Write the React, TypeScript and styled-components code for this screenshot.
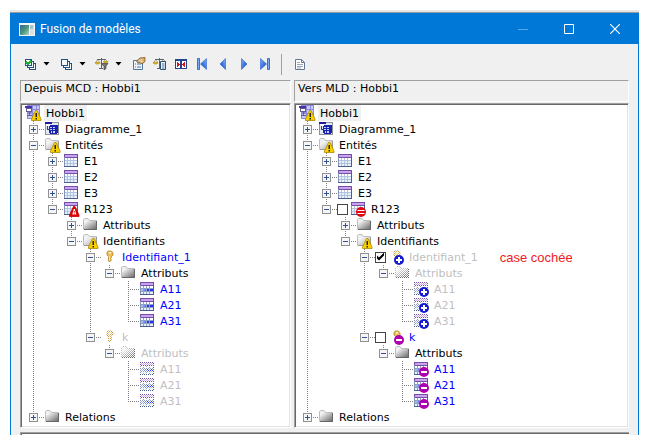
import React, { useState } from 'react';
import styled, { createGlobalStyle, css } from 'styled-components';

const GlobalStyle = createGlobalStyle`
  * { box-sizing: border-box; }
  body { margin: 0; background: #fff; }
  button { border: 0; padding: 0; background: none; font: inherit; color: inherit; }
`;

/* ---------- Window frame ---------- */

const Page = styled.div`
  padding: 13px 10px 9px;
`;

const Window = styled.main`
  border: 1px solid #0078d7;
  border-bottom: 0;
  background: #f0f0f0;
  box-shadow: 0 -1px 0 #9a9a9a, 0 -3px 0 #e6e6e6;
  font: 11px/16px "DejaVu Sans", Verdana, sans-serif;
  color: #000;
  overflow: hidden;
`;

const TitleBar = styled.header`
  display: flex;
  align-items: center;
  height: 30px;
  padding-left: 8px;
  background: #0078d7;
  color: #fff;
`;

const Title = styled.h1`
  flex: 1;
  margin: 0 0 0 5px;
  font: 12px/16px Roboto, "Segoe UI", sans-serif;
`;

const CaptionButton = styled.button`
  display: grid;
  place-items: center;
  width: 46px;
  height: 30px;
  &:disabled { opacity: 0.35; }
`;

/* ---------- Toolbar ---------- */

const Toolbar = styled.div`
  display: flex;
  align-items: center;
  gap: 5px;
  height: 36px;
  padding: 4px 11px 0;
`;

const SplitGroup = styled.div`
  display: flex;
  gap: 4px;
`;

const Split = styled.div`
  display: flex;
`;

const ToolButton = styled.button`
  display: grid;
  place-items: center;
  width: 16px;
  height: 16px;
`;

const Separator = styled.div`
  width: 1px;
  height: 21px;
  margin: 0 5px 0 3px;
  background: #a0a0a0;
`;

/* ---------- Panes ---------- */

const Panes = styled.div`
  display: grid;
  grid-template-columns: 271fr 335fr;
  gap: 3px;
  padding: 0 9px;
`;

const Pane = styled.section`
  min-width: 0;
`;

const PaneTitle = styled.h2`
  height: 22px;
  margin: 0 0 1px;
  padding-left: 3px;
  border: 1px solid #fff;
  border-top-color: #a0a0a0;
  border-left-color: #a0a0a0;
  font: inherit;
`;

const TreeBox = styled.div`
  padding: 1px 1px 2px 4px;
  border: 1px solid #fff;
  border-top-color: #a0a0a0;
  border-left-color: #a0a0a0;
  background: #fff;
  box-shadow: inset 1px 1px 0 #696969, inset -1px -1px 0 #e3e3e3;
`;

const BottomPane = styled.div`
  height: 3px;
  margin: 4px 9px 0;
  border-top: 1px solid #a0a0a0;
  border-left: 1px solid #a0a0a0;
  background: #fff;
  box-shadow: inset 1px 1px 0 #696969;
`;

/* ---------- Tree ---------- */

const List = styled.ul`
  margin: 0;
  padding: 0;
  list-style: none;
`;

const Row = styled.div`
  display: flex;
  align-items: center;
  height: 16px;
  white-space: nowrap;
`;

type GuideKind = 'none' | 'through' | 'branch' | 'last';

const vDots = 'repeating-linear-gradient(to bottom, #808080 0 1px, transparent 1px 2px)';
const hDots = 'repeating-linear-gradient(to right, #808080 0 1px, transparent 1px 2px)';

const Guide = styled.span<{ $kind: GuideKind }>`
  display: grid;
  flex: none;
  align-items: center;
  width: 19px;
  height: 16px;
  padding-left: 4px;
  background-repeat: no-repeat;
  ${p => p.$kind === 'through' && css`
    background-image: ${vDots};
    background-size: 1px 16px;
    background-position: 8px 0;
  `}
  ${p => (p.$kind === 'branch' || p.$kind === 'last') && css`
    background-image: ${vDots}, ${hDots};
    background-size: 1px ${p.$kind === 'last' ? 9 : 16}px, 11px 1px;
    background-position: 8px 0, 8px 8px;
  `}
`;

const Expander = styled.button`
  width: 9px;
  height: 9px;
  margin-top: 1px;
  svg { display: block; }
`;

const Check = styled.input`
  appearance: none;
  flex: none;
  width: 11px;
  height: 11px;
  margin: 0 2px 0 0;
  border: 1px solid #444;
  background: #fff;
  &:checked::before {
    content: "";
    display: block;
    height: 9px;
    background: #000;
    clip-path: polygon(1px 3px, 3px 5px, 8px 0, 8px 3px, 3px 8px, 1px 6px);
  }
`;

const Glyph = styled.svg`
  display: block;
  flex: none;
  width: 16px;
  height: 16px;
`;

type Tone = 'normal' | 'new' | 'ghost';
const tones: Record<Tone, string> = { normal: '#000', new: '#0000ff', ghost: '#c0c0c0' };

const Label = styled.label<{ $tone: Tone; $current?: boolean }>`
  height: 16px;
  margin-left: 3px;
  padding: 0 2px;
  line-height: 18px;
  color: ${p => tones[p.$tone]};
  background: ${p => (p.$current ? '#f0f0f0' : 'transparent')};
`;

const Note = styled.span`
  height: 16px;
  margin-left: 20px;
  font: 13px/18px "Liberation Sans", Arial, sans-serif;
  color: #ed1c24;
`;

/* ---------- Tree icons ---------- */

type IconName = 'model' | 'diagram' | 'folder' | 'table' | 'column' | 'key';
type BadgeName = 'warning' | 'error' | 'stop' | 'add' | 'remove';

const cellFill = (x: number, y: number, column?: boolean) => {
  if (column && y === 8) return x < 4 ? '#a8b4f4' : x < 8 ? '#7580f2' : '#2b35e8';
  return y === 5 ? '#fff' : '#e8effc';
};

const TableShape = ({ column }: { column?: boolean }) => (
  <g shapeRendering="crispEdges">
    <rect x="1" y="1" width="14" height="13" fill={column ? '#8ea2c6' : '#b4c3dc'} />
    <rect x="1" y="1" width="14" height="4" fill="#7350a4" />
    <rect x="2" y="2" width="12" height="2" fill="#cba2f0" />
    {[5, 8, 11].map(y =>
      [2, 5, 8, 11].map(x => (
        <rect
          key={`${x}-${y}`}
          x={x}
          y={y}
          width={x === 11 ? 3 : 2}
          height="2"
          fill={cellFill(x, y, column)}
        />
      ))
    )}
    <path d="M1 4h1v10h-1z" fill="#8295b8" />
    <path d="M14 4h1v10h-1zM1 13h14v1H1z" fill="#4a5f8c" />
  </g>
);

const FolderShape = ({ light }: { light?: boolean }) => (
  <g>
    <path d="M1 13V2.500L2.500 1.500H6L7.500 3H15V13Z" fill="#eee" />
    <path d="M1.500 12.500V2.500L2.500 1.500H6L7.500 3.500H14.500" fill="none" stroke="#bdbdbd" />
    <rect x="2" y="4" width="13" height="9" fill={light ? 'url(#folderLight)' : 'url(#folderDark)'} />
    <path d="M2 12.500H15M14.500 4V13" stroke={light ? '#9a9a9a' : '#666'} />
  </g>
);

const shapes: Record<IconName, React.ReactNode> = {
  model: (
    <g shapeRendering="crispEdges">
      <rect x="2" y="0" width="13" height="14" fill="#8c8ae0" />
      <path d="M8 1h3v3H8zM12 1h2v3h-2zM8 5h3v3H8zM12 5h2v3h-2zM3 9h4v4H3zM8 9h3v4H8zM12 9h2v4h-2z" fill="#c9c9fa" />
      <rect x="0" y="1" width="7" height="2" fill="#4a30a8" />
      <rect x="1.500" y="3.500" width="5" height="3" fill="#fff" stroke="#5b5b90" />
      <path d="M4.500 7v3M2 10.500h5" stroke="#5c5ca0" />
    </g>
  ),
  diagram: (
    <g shapeRendering="crispEdges">
      <rect x="1" y="1" width="14" height="13" fill="#8e9098" />
      <rect x="2" y="2" width="12" height="11" fill="#e5e9f2" />
      <path d="M1 1h7v2H1z" fill="#2718a0" />
      <path d="M2 3h4v2H2z" fill="#fff" />
      <path d="M6 4h8v1h-8zM5 5h9v7h-1v1H6v-1H5z" fill="#1824ad" />
      <path d="M6 6h2v1H6zM9 6h2v1H9zM6 8h2v1H6zM9 8h2v1H9zM7 10h1v2H7zM9 10h2v2H9z" fill="#c6d2ff" />
      <path d="M3 5v3h2" fill="none" stroke="#333b90" />
    </g>
  ),
  folder: <FolderShape />,
  table: <TableShape />,
  column: <TableShape column />,
  key: (
    <g>
      <path d="M6 3.500L7 2H10L12 3.500V6L10.500 7.500V8.500L9.500 9.500L10.500 10.500L9.500 12L8.500 13L7.500 12V7.500L6 6Z" fill="#e8c057" stroke="#b5842c" strokeWidth="0.800" />
      <circle cx="9" cy="3.800" r="1" fill="#fff8df" />
      <path d="M8.500 7v4.500" stroke="#fbe49b" />
    </g>
  ),
};

const badges: Record<BadgeName, React.ReactNode> = {
  warning: (
    <g>
      <path d="M10.500 5.500H12L16 14V15.500H6.500V14Z" fill="#f8d000" stroke="#b08a00" strokeWidth="0.800" />
      <path d="M10.500 8h1.500v4h-1.500zM10.500 13h1.500v1.500h-1.500z" fill="#222" />
    </g>
  ),
  error: (
    <g>
      <path d="M10.500 5.500H12L16 14V15.500H6.500V14Z" fill="#e00000" stroke="#c00000" strokeWidth="0.800" />
      <path d="M10.800 8h1l1.500 5.500h-4z" fill="#fff" />
      <path d="M10.800 10h1v1.500h-1zM10.800 12.500h1v1h-1z" fill="#d00000" />
    </g>
  ),
  stop: (
    <g>
      <circle cx="11" cy="11" r="5" fill="#df0712" />
      <path d="M7.500 9.500h7M7.500 12.500h7" stroke="#fff" />
    </g>
  ),
  add: (
    <g>
      <circle cx="11" cy="11" r="5" fill="#151bcf" />
      <path d="M11 8v6M8 11h6" stroke="#fff" strokeWidth="2" />
    </g>
  ),
  remove: (
    <g>
      <circle cx="11" cy="11" r="5" fill="#ae00ae" />
      <path d="M8 11h6" stroke="#fff" strokeWidth="2" />
    </g>
  ),
};

const TreeIcon = ({ icon, badge, ghost }: { icon: IconName; badge?: BadgeName; ghost?: boolean }) => (
  <Glyph viewBox="0 0 16 16" overflow="visible" aria-hidden="true">
    <defs>
      <linearGradient id="folderDark" x1="0" y1="0" x2="1" y2="1">
        <stop offset="0.100" stopColor="#f4f4f4" />
        <stop offset="1" stopColor="#5e5e5e" />
      </linearGradient>
      <linearGradient id="folderLight" x1="0" y1="0" x2="1" y2="1">
        <stop offset="0.200" stopColor="#f2f2f2" />
        <stop offset="1" stopColor="#a4a4a4" />
      </linearGradient>
      <pattern id="checker" width="2" height="2" patternUnits="userSpaceOnUse">
        <path d="M0 0h1v1H0zM1 1h1v1H1z" fill="#fff" />
      </pattern>
      <mask id="dither" maskUnits="userSpaceOnUse" x="0" y="0" width="16" height="16">
        <rect width="16" height="16" fill="url(#checker)" />
      </mask>
    </defs>
    <g mask={ghost ? 'url(#dither)' : undefined}>
      {icon === 'folder' && badge ? <FolderShape light /> : shapes[icon]}
    </g>
    {badge && badges[badge]}
  </Glyph>
);

/* ---------- Tree data ---------- */

interface TreeNode {
  label: string;
  icon: IconName;
  badge?: BadgeName;
  tone?: Tone;
  checked?: boolean;
  note?: string;
  collapsed?: boolean;
  children?: TreeNode[];
}

const columns = (tone: Tone, badge?: BadgeName): TreeNode => ({
  label: 'Attributs',
  icon: 'folder',
  tone: tone === 'ghost' ? 'ghost' : 'normal',
  children: ['A11', 'A21', 'A31'].map(label => ({ label, icon: 'column', tone, badge })),
});

const buildModel = (entityExtra: Partial<TreeNode>, identifiers: TreeNode[]): TreeNode => ({
  label: 'Hobbi1',
  icon: 'model',
  badge: 'warning',
  children: [
    { label: 'Diagramme_1', icon: 'diagram', collapsed: true, children: [] },
    {
      label: 'Entités',
      icon: 'folder',
      badge: 'warning',
      children: [
        ...['E1', 'E2', 'E3'].map((label): TreeNode => ({ label, icon: 'table', collapsed: true, children: [] })),
        {
          label: 'R123',
          icon: 'table',
          ...entityExtra,
          children: [
            { label: 'Attributs', icon: 'folder', collapsed: true, children: [] },
            { label: 'Identifiants', icon: 'folder', badge: 'warning', children: identifiers },
          ],
        },
      ],
    },
    { label: 'Relations', icon: 'folder', collapsed: true, children: [] },
  ],
});

const source = buildModel({ badge: 'error' }, [
  { label: 'Identifiant_1', icon: 'key', tone: 'new', children: [columns('new')] },
  { label: 'k', icon: 'key', tone: 'ghost', children: [columns('ghost')] },
]);

const target = buildModel({ badge: 'stop', checked: false }, [
  {
    label: 'Identifiant_1',
    icon: 'key',
    badge: 'add',
    tone: 'ghost',
    checked: true,
    note: 'case cochée',
    children: [columns('ghost', 'add')],
  },
  { label: 'k', icon: 'key', badge: 'remove', tone: 'new', checked: false, children: [columns('new', 'remove')] },
]);

interface ItemProps {
  node: TreeNode;
  path: string;
  lines: boolean[];
  last: boolean;
  root?: boolean;
}

const TreeItem = ({ node, path, lines, last, root }: ItemProps) => {
  const [open, setOpen] = useState(!node.collapsed);
  const tone = node.tone ?? 'normal';
  const hasCheck = node.checked !== undefined;
  return (
    <li role="treeitem" aria-expanded={node.children ? open : undefined} aria-selected={!!root}>
      <Row>
        {lines.map((line, i) => <Guide key={i} $kind={line ? 'through' : 'none'} />)}
        {!root && (
          <Guide $kind={last ? 'last' : 'branch'}>
            {node.children && (
              <Expander
                type="button"
                aria-label={`${open ? 'Réduire' : 'Développer'} ${node.label}`}
                onClick={() => setOpen(!open)}
              >
                <svg width="9" height="9" shapeRendering="crispEdges" aria-hidden="true">
                  <rect x="0.500" y="0.500" width="8" height="8" fill="#f6f6f6" stroke="#919191" />
                  <path d={open ? 'M2 4.500h5' : 'M2 4.500h5M4.500 2v5'} stroke="#33509c" />
                </svg>
              </Expander>
            )}
          </Guide>
        )}
        {hasCheck && <Check type="checkbox" id={path} defaultChecked={node.checked} />}
        <TreeIcon icon={node.icon} badge={node.badge} ghost={tone === 'ghost'} />
        <Label as={hasCheck ? 'label' : 'span'} htmlFor={hasCheck ? path : undefined} $tone={tone} $current={root}>
          {node.label}
        </Label>
        {node.note && <Note>{node.note}</Note>}
      </Row>
      {open && node.children && node.children.length > 0 && (
        <List role="group">
          {node.children.map((child, i) => (
            <TreeItem
              key={child.label}
              node={child}
              path={`${path}-${child.label}`}
              lines={root ? [] : [...lines, !last]}
              last={i === node.children!.length - 1}
            />
          ))}
        </List>
      )}
    </li>
  );
};

const ModelPane = ({ title, id, model }: { title: string; id: string; model: TreeNode }) => (
  <Pane>
    <PaneTitle>{title}</PaneTitle>
    <TreeBox>
      <List role="tree" aria-label={title}>
        <TreeItem node={model} path={id} lines={[]} last root />
      </List>
    </TreeBox>
  </Pane>
);

/* ---------- Toolbar icons ---------- */

const Stack = ({ ticked }: { ticked?: boolean }) => (
  <Glyph viewBox="0 0 16 16" shapeRendering="crispEdges">
    <g fill="#f5f9fc" stroke="#24527e">
      <path d="M7.500 7.500h6v6h-6z" />
      <path d="M5.500 5.500h6v6h-6z" />
      <path d="M3.500 3.500h6v6h-6z" />
    </g>
    {ticked && <path d="M4 6l2 2 3-3" fill="none" stroke="#1fae2d" strokeWidth="2" />}
  </Glyph>
);

const Balance = ({ document: withDocument }: { document?: boolean }) => (
  <Glyph viewBox="0 0 16 16">
    <path d="M3 3.500h9M7.500 2v10M5 12.500h4" stroke="#58636b" fill="none" />
    <path d="M3.500 3.500L1.500 7M3.500 3.500L6 7M11.500 3.500L9.500 6M11.500 3.500L14 6" stroke="#8b7d45" strokeWidth="0.700" />
    <path d="M1 6.500h5L5 8H2zM9.500 5.500H14L13 7h-3z" fill="#e9b913" stroke="#a97c0c" strokeWidth="0.500" />
    {withDocument ? (
      <g>
        <path d="M8.500 5.500h5v8h-5z" fill="#eaf2fb" stroke="#31527c" />
        <path d="M10 8h2.500M10 10h2.500M10 12h2.500" stroke="#31527c" strokeWidth="0.800" />
      </g>
    ) : (
      <path d="M7 7.500h7L12 10v2.500L10 14V10.500Z" fill="#777" stroke="#444" strokeWidth="0.700" />
    )}
  </Glyph>
);

const Properties = () => (
  <Glyph viewBox="0 0 16 16">
    <path d="M2.500 4.500h9v9h-9z" fill="#eef4fb" stroke="#52759f" />
    <path d="M4 8h1M6 8h4M4 11h1M6 11h4" stroke="#52759f" />
    <path d="M5.500 5L9 2l5-.5v4L11 8 9 6.500 7 7Z" fill="#d8b078" stroke="#805520" strokeWidth="0.800" />
    <path d="M8 4.500l3-1M9 6l3-1" stroke="#fbe6bb" strokeWidth="0.800" />
  </Glyph>
);

const Compare = () => (
  <Glyph viewBox="0 0 16 16" shapeRendering="crispEdges">
    <path d="M2.500 3.500h5v9h-5zM8.500 3.500h5v9h-5z" fill="#fff" stroke="#24448c" />
    <path d="M2 4h12" stroke="#24448c" strokeWidth="2" />
    <path d="M4 6h1v1h1v1h1v1H6v1H5v1H4zM12 6h-1v1h-1v1H9v1h1v1h1v1h1z" fill="#d31919" />
  </Glyph>
);

const BlueArrow = ({ back, bar }: { back?: boolean; bar?: boolean }) => (
  <Glyph viewBox="0 0 16 16">
    <defs>
      <linearGradient id="arrowBlue" x1="0" y1="0" x2="1" y2="1">
        <stop offset="0" stopColor="#7fb4f5" />
        <stop offset="1" stopColor="#0a3cc8" />
      </linearGradient>
    </defs>
    <g transform={back ? 'translate(16 0) scale(-1 1)' : undefined}>
      <path d={bar ? 'M3.500 2.500v11L9.500 8z' : 'M5.500 2.500v11L11 8z'} fill="url(#arrowBlue)" stroke="#2a62d2" strokeWidth="0.600" />
      {bar && <path d="M10.500 2.500h2v11h-2z" fill="#78a8ee" stroke="#2357c4" strokeWidth="0.800" />}
    </g>
  </Glyph>
);

const Report = () => (
  <Glyph viewBox="0 0 16 16">
    <path d="M3.500 3.500h6l3 3v7h-9z" fill="#fff" stroke="#657894" />
    <path d="M9.500 3.500v3h3" fill="none" stroke="#657894" />
    <path d="M5 6.500h3M5 8.500h6M5 10.500h6M5 12h4" stroke="#8193ad" strokeWidth="0.800" />
  </Glyph>
);

const Caret = () => (
  <svg width="7" height="4" viewBox="0 0 7 4" aria-hidden="true">
    <path d="M0.500 0h6L3.500 3.500z" fill="#000" />
  </svg>
);

const splitTools = [
  { label: 'Sélectionner', icon: <Stack ticked /> },
  { label: 'Désélectionner', icon: <Stack /> },
  { label: 'Filtrer', icon: <Balance /> },
];

const tools = [
  { label: 'Propriétés', icon: <Properties /> },
  { label: 'Options', icon: <Balance document /> },
  { label: 'Comparer', icon: <Compare /> },
  { label: 'Premier', icon: <BlueArrow back bar /> },
  { label: 'Précédent', icon: <BlueArrow back /> },
  { label: 'Suivant', icon: <BlueArrow /> },
  { label: 'Dernier', icon: <BlueArrow bar /> },
];

const AppIcon = () => (
  <svg width="16" height="13" shapeRendering="crispEdges" aria-hidden="true">
    <defs>
      <linearGradient id="appFill" x1="0" y1="0" x2="1" y2="1">
        <stop offset="0" stopColor="#3b62a0" />
        <stop offset="0.500" stopColor="#4a9478" />
        <stop offset="1" stopColor="#b5d4c8" />
      </linearGradient>
    </defs>
    <rect width="16" height="13" fill="#f3f6f6" />
    <rect x="1" y="2" width="9" height="10" fill="url(#appFill)" />
    <rect x="11" y="2" width="4" height="10" fill="#dce1e4" />
    <rect x="11" y="2" width="3" height="4" fill="#a8c2cf" />
  </svg>
);

export default function App() {
  return (
    <Page>
      <GlobalStyle />
      <Window>
        <TitleBar>
          <AppIcon />
          <Title>Fusion de modèles</Title>
          <CaptionButton type="button" aria-label="Réduire" disabled>
            <svg width="10" height="10"><path d="M0 5.500h10" stroke="#fff" /></svg>
          </CaptionButton>
          <CaptionButton type="button" aria-label="Agrandir">
            <svg width="10" height="10"><path d="M.5.500h9v9h-9z" fill="none" stroke="#fff" /></svg>
          </CaptionButton>
          <CaptionButton type="button" aria-label="Fermer">
            <svg width="10" height="10"><path d="M0 0l10 10M10 0L0 10" stroke="#fff" strokeWidth="1.200" /></svg>
          </CaptionButton>
        </TitleBar>
        <Toolbar role="toolbar" aria-label="Outils">
          <SplitGroup>
            {splitTools.map(tool => (
              <Split key={tool.label}>
                <ToolButton type="button" aria-label={tool.label}>{tool.icon}</ToolButton>
                <ToolButton type="button" aria-label={`${tool.label} : menu`}><Caret /></ToolButton>
              </Split>
            ))}
          </SplitGroup>
          {tools.map(tool => (
            <ToolButton key={tool.label} type="button" aria-label={tool.label}>{tool.icon}</ToolButton>
          ))}
          <Separator />
          <ToolButton type="button" aria-label="Rapport"><Report /></ToolButton>
        </Toolbar>
        <Panes>
          <ModelPane id="mcd" title="Depuis MCD : Hobbi1" model={source} />
          <ModelPane id="mld" title="Vers MLD : Hobbi1" model={target} />
        </Panes>
        <BottomPane />
      </Window>
    </Page>
  );
}
